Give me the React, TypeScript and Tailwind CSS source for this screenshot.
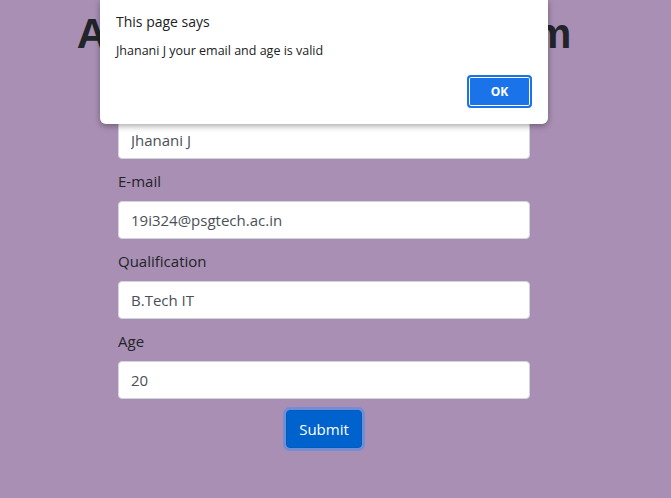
const fields = [
  { label: "Name", value: "Jhanani J" },
  { label: "E-mail", value: "19i324@psgtech.ac.in" },
  { label: "Qualification", value: "B.Tech IT" },
  { label: "Age", value: "20" },
];

export default function App() {
  return (
    <div className="relative h-[498px] w-[671px] overflow-hidden bg-[#a98fb4] font-['Open_Sans',sans-serif] text-[#212529]">
      <div className="w-[648px]">
        <h1 className="pt-[10px] text-center font-['Liberation_Sans',sans-serif] text-[42px] font-bold leading-[48px] text-[#212529]">
          Application Details Form
        </h1>

        <form className="mx-auto mt-[31px] w-[412px]">
          {fields.map((field, index) => (
            <div key={field.label} className={index === 0 ? "" : "mt-[10px]"}>
              <label className="mb-2 block text-[15px] leading-6">{field.label}</label>
              <input
                readOnly
                value={field.value}
                className="block h-[38px] w-full rounded-[4px] border border-[#ced4da] bg-white px-3 text-[15px] text-[#495057] outline-none"
              />
            </div>
          ))}
          <div className="mt-[11px] flex justify-center">
            <button
              type="button"
              className="h-[38px] rounded-[4px] border border-[#005cbf] bg-[#0062cc] px-3 text-[15px] text-white shadow-[0_0_0_3px_rgba(100,140,220,0.8)]"
            >
              Submit
            </button>
          </div>
        </form>
      </div>

      {/* browser alert */}
      <div className="absolute left-[100px] top-0 h-[124px] w-[448px] rounded-b-[6px] bg-white px-4 pt-[12px] shadow-[0_2px_6px_rgba(0,0,0,0.35)]">
        <p className="text-[14px] leading-5 text-[#202124]">This page says</p>
        <p className="mt-[11px] text-[12.5px] leading-4 text-[#202124]">Jhanani J your email and age is valid</p>
        <div className="mt-[16px] flex justify-end">
          <button
            type="button"
            className="h-[33px] w-[65px] rounded-[4px] border-2 border-[#1a73e8] bg-[#1a73e8] text-[12px] font-bold text-white shadow-[inset_0_0_0_1px_white]"
          >
            OK
          </button>
        </div>
      </div>
    </div>
  );
}
